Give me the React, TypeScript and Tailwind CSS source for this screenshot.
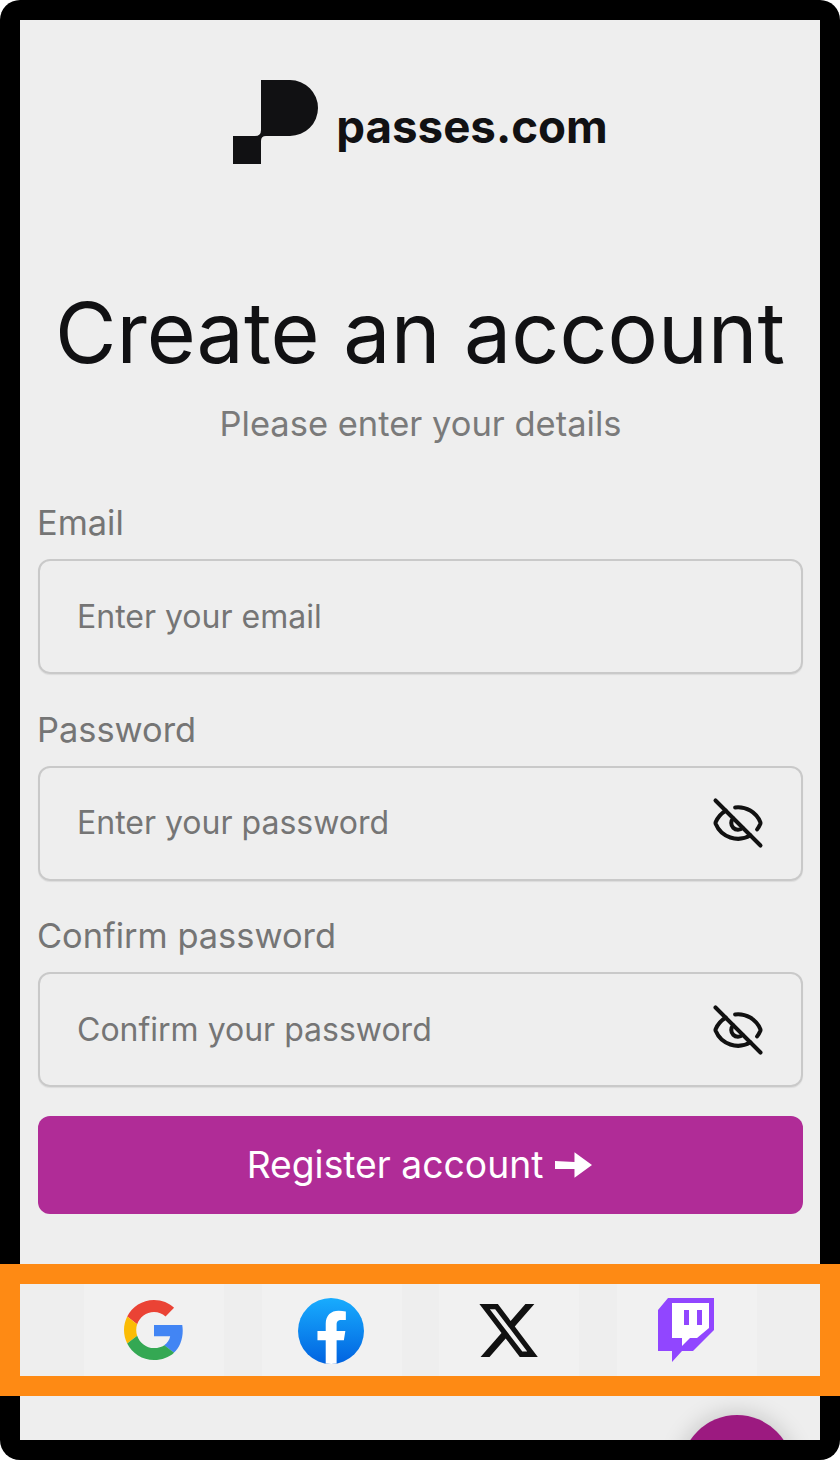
import React from 'react';
import { EyeOff } from 'lucide-react';

const Logo = () => (
  <svg width="85" height="84" viewBox="0 0 85 84" fill="#111113">
    <path d="M28 0H57A28 28 0 0 1 57 56H33Q28 56 28 61V84H0V56H22Q28 56 28 50Z" />
  </svg>
);

const GoogleIcon = () => (
  <svg width="60" height="60" viewBox="0 0 48 48">
    <path fill="#EA4335" d="M24 9.5c3.54 0 6.71 1.22 9.21 3.6l6.85-6.85C35.9 2.38 30.47 0 24 0 14.62 0 6.51 5.38 2.56 13.22l7.98 6.19C12.43 13.72 17.74 9.5 24 9.5z" />
    <path fill="#4285F4" d="M46.98 24.55c0-1.57-.15-3.09-.38-4.55H24v9.02h12.94c-.58 2.96-2.26 5.48-4.78 7.18l7.73 6c4.51-4.18 7.09-10.36 7.09-17.65z" />
    <path fill="#FBBC05" d="M10.53 28.59c-.48-1.45-.76-2.99-.76-4.59s.27-3.14.76-4.59l-7.98-6.19C.92 16.46 0 20.12 0 24c0 3.88.92 7.54 2.56 10.78l7.97-6.19z" />
    <path fill="#34A853" d="M24 48c6.48 0 11.93-2.13 16.05-5.81l-7.73-6c-2.15 1.45-4.92 2.3-8.32 2.3-6.26 0-11.57-4.22-13.47-9.91l-7.98 6.19C6.51 42.62 14.62 48 24 48z" />
  </svg>
);

const FacebookIcon = () => (
  <svg width="66" height="66" viewBox="0 0 40 40">
    <defs>
      <linearGradient id="fb" x1="0" y1="0" x2="0" y2="1">
        <stop offset="0" stopColor="#18acfe" />
        <stop offset="1" stopColor="#0163e0" />
      </linearGradient>
    </defs>
    <circle cx="20" cy="20" r="20" fill="url(#fb)" />
    <path fill="#fff" d="M27.8 25.6l.9-5.6h-5.3v-3.9c0-1.6.6-2.8 3-2.8H29V8.2c-1.4-.2-3-.4-4.4-.4-4.6 0-7.8 2.8-7.8 7.8V20h-5v5.6h5v14.1c1.1.2 2.2.3 3.3.3 1.1 0 2.2-.1 3.3-.3V25.6h4.4z" />
  </svg>
);

const XIcon = () => (
  <svg width="65" height="65" viewBox="0 0 24 24" fill="#111">
    <path d="M18.244 2.25h3.308l-7.227 8.26 8.502 11.24H16.17l-5.214-6.817L4.99 21.75H1.68l7.73-8.835L1.254 2.25H8.08l4.713 6.231zm-1.161 17.52h1.833L7.084 4.126H5.117z" />
  </svg>
);

const TwitchIcon = () => (
  <svg width="56" height="64" viewBox="0 0 56 64">
    <path fill="#9146ff" d="M10 0H56V32L35 53H24L14 64V53H0V12Z" />
    <path fill="#fff" d="M14 5H51V30L39 40H32L24 48V40H14Z" />
    <path fill="#9146ff" d="M26 12H31V27H26ZM39 12H44V27H39Z" />
  </svg>
);

const fields = [
  { label: 'Email', placeholder: 'Enter your email', secret: false },
  { label: 'Password', placeholder: 'Enter your password', secret: true },
  { label: 'Confirm password', placeholder: 'Confirm your password', secret: true },
];

export default function App() {
  return (
    <div className="relative w-[840px] h-[1460px] bg-white font-['Inter',sans-serif]">
      <div className="h-full rounded-[20px] bg-black p-5">
        <div className="relative h-full overflow-hidden bg-[#eeeeee] pl-[18px] pr-[17px] pt-[60px]">
          <div className="flex items-center justify-center">
            <Logo />
            <span className="ml-[18px] mt-[9px] text-[45.7px] font-bold leading-none text-[#111113]">passes.com</span>
          </div>

          <h1 className="-ml-px mt-[118px] text-center text-[84.2px] font-normal leading-[100px] text-[#111113]">Create an account</h1>
          <p className="mt-[22px] text-center text-[34.5px] leading-[40px] text-[#7a7a7a]">Please enter your details</p>

          <div className="mt-[59px] flex flex-col gap-[35.5px]">
            {fields.map((f) => (
              <div key={f.label}>
                <div className="-ml-px flex h-[40px] items-center text-[34.4px] text-[#757575]">{f.label}</div>
                <div className="mt-[16px] flex h-[115px] items-center justify-between rounded-[12px] border-2 border-[#c9c9c9] pl-[37px] pr-[36px] shadow-[0_1px_1px_rgba(0,0,0,0.08)]">
                  <span className="text-[32px] text-[#757575]">{f.placeholder}</span>
                  {f.secret && <EyeOff size={54} strokeWidth={1.8} color="#111" />}
                </div>
              </div>
            ))}
          </div>

          <button className="mt-[29px] flex h-[98px] w-full items-center justify-center gap-[12px] rounded-[12px] bg-[#b02c97] pr-[2px] text-[37.25px] text-white">
            Register account
            <svg width="37" height="26" viewBox="0 0 38 26" fill="#fff">
              <path d="M0 9L20 10V0L38 13L20 26V17L0 17Z" />
            </svg>
          </button>

          <div className="ml-[46px] mt-[70px] flex h-[92px] w-[673px] justify-between">
            <div className="flex w-[140px] items-center justify-center bg-[#f1f1f1]"><GoogleIcon /></div>
            <div className="flex w-[140px] items-center justify-center bg-[#f1f1f1] pr-[2px] pt-[2px]"><FacebookIcon /></div>
            <div className="flex w-[140px] items-center justify-center bg-[#f1f1f1] pr-[2px]"><XIcon /></div>
            <div className="flex w-[140px] items-center justify-center bg-[#f1f1f1] pr-[2px]"><TwitchIcon /></div>
          </div>

          <div className="absolute left-[661px] top-[1395px] h-[112px] w-[112px] rounded-full bg-[#9c1a80] shadow-[0_0_24px_rgba(0,0,0,0.2)]" />
        </div>
      </div>

      <div className="absolute inset-x-0 top-[1264px] h-[132px] border-[20px] border-[#fe8a14]" />
    </div>
  );
}
